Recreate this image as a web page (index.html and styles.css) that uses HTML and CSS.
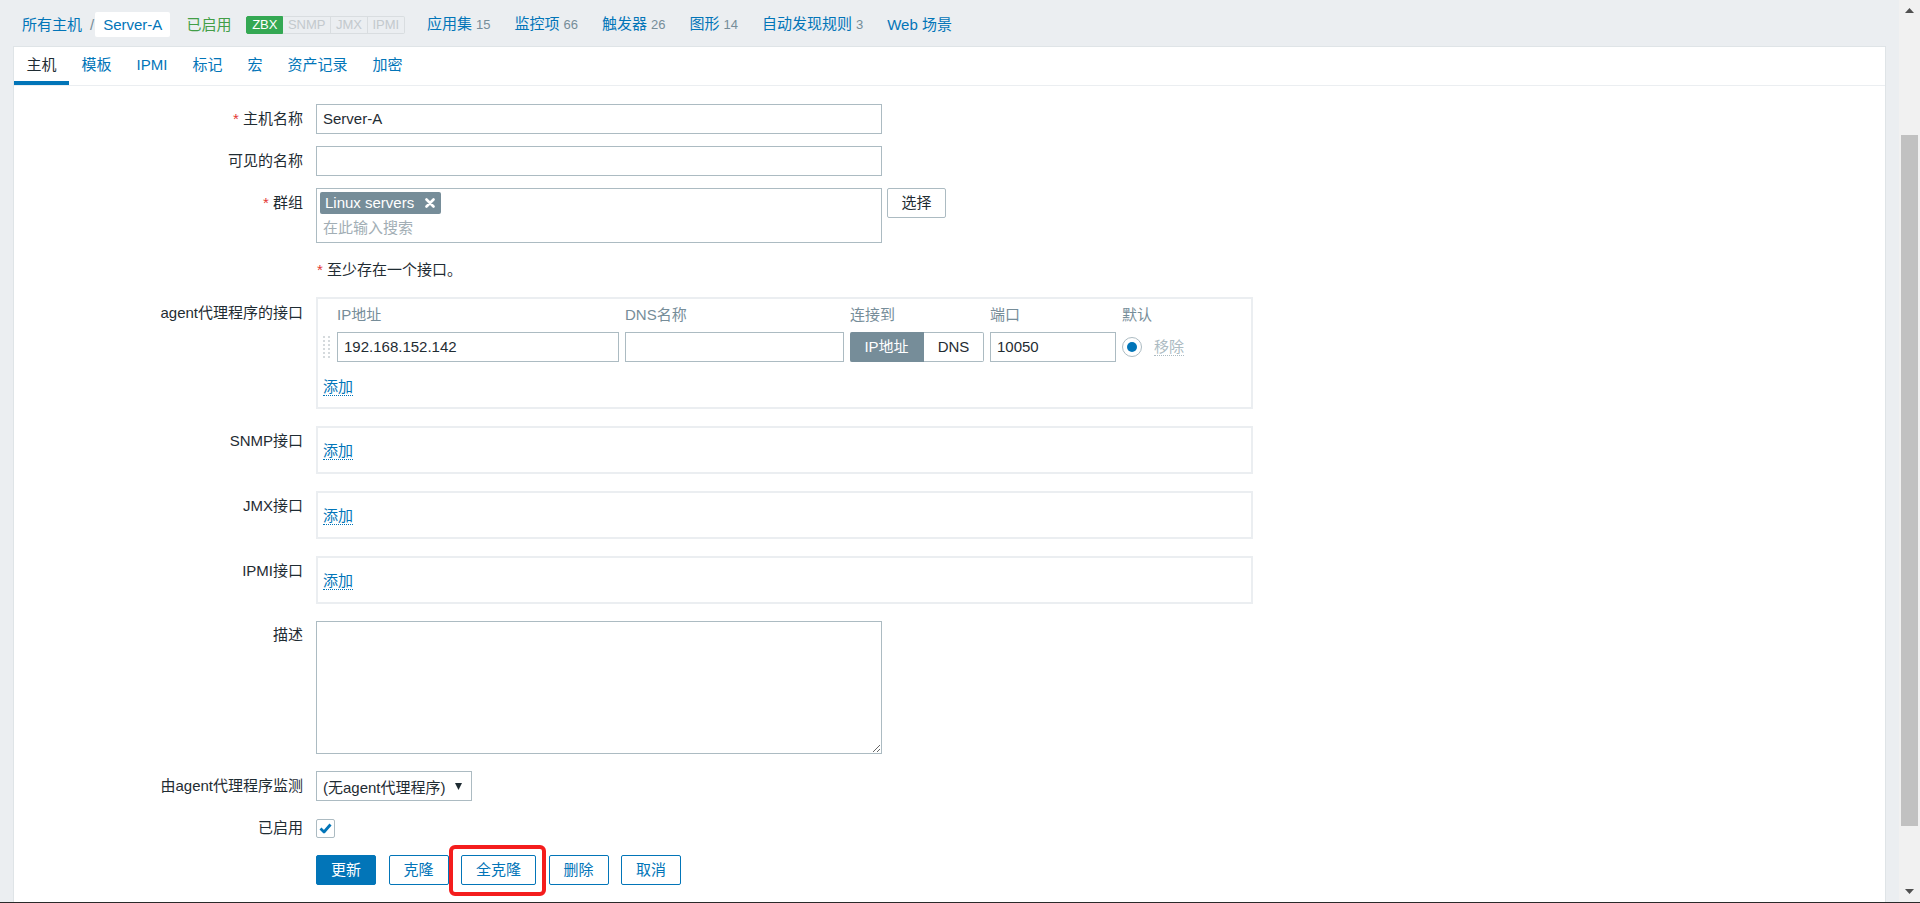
FILE: index.html
```html
<!DOCTYPE html>
<html lang="zh-CN">
<head>
<meta charset="utf-8">
<title>主机</title>
<link rel="stylesheet" href="styles.css">
</head>
<body>
<div class="page">
  <div class="header">
    <a class="link crumb">所有主机</a><span class="sep">/</span><span class="crumb-cur">Server-A</span>
    <span class="status-on">已启用</span>
    <span class="avail"><span class="av av-on">ZBX</span><span class="av">SNMP</span><span class="av">JMX</span><span class="av">IPMI</span></span>
    <a class="link nav nav-first">应用集<span class="cnt">15</span></a>
    <a class="link nav">监控项<span class="cnt">66</span></a>
    <a class="link nav">触发器<span class="cnt">26</span></a>
    <a class="link nav">图形<span class="cnt">14</span></a>
    <a class="link nav">自动发现规则<span class="cnt">3</span></a>
    <a class="link nav">Web 场景</a>
  </div>
  <div class="panel">
    <ul class="tabs">
      <li class="tab tab-active">主机</li>
      <li class="tab">模板</li>
      <li class="tab">IPMI</li>
      <li class="tab">标记</li>
      <li class="tab">宏</li>
      <li class="tab">资产记录</li>
      <li class="tab">加密</li>
    </ul>
    <div class="form">
      <div class="row row-first">
        <div class="lbl"><span class="req">*</span> 主机名称</div>
        <div class="field"><div class="input">Server-A</div></div>
      </div>
      <div class="row">
        <div class="lbl">可见的名称</div>
        <div class="field"><div class="input"></div></div>
      </div>
      <div class="row">
        <div class="lbl"><span class="req">*</span> 群组</div>
        <div class="field field-inline">
          <div class="multiselect">
            <span class="tag">Linux servers<svg class="tag-x" width="10" height="10" viewBox="0 0 10 10"><path d="M1.5 1.5 L8.5 8.5 M8.5 1.5 L1.5 8.5" stroke="#fff" stroke-width="2.6" stroke-linecap="round"/></svg></span>
            <div class="placeholder">在此输入搜索</div>
          </div>
          <div class="btn-grey">选择</div>
        </div>
      </div>
      <div class="row">
        <div class="lbl"></div>
        <div class="field msg"><span class="req">*</span> 至少存在一个接口。</div>
      </div>
      <div class="row">
        <div class="lbl lbl-box">agent代理程序的接口</div>
        <div class="field">
          <div class="iface iface-agent">
            <div class="iface-grid">
              <span></span>
              <span class="th">IP地址</span>
              <span class="th">DNS名称</span>
              <span class="th">连接到</span>
              <span class="th">端口</span>
              <span class="th">默认</span>
              <svg class="drag" width="8" height="24" viewBox="0 0 8 24"><g fill="#d5dadd"><rect x="0" y="0" width="2" height="2"/><rect x="5" y="0" width="2" height="2"/><rect x="0" y="4" width="2" height="2"/><rect x="5" y="4" width="2" height="2"/><rect x="0" y="8" width="2" height="2"/><rect x="5" y="8" width="2" height="2"/><rect x="0" y="12" width="2" height="2"/><rect x="5" y="12" width="2" height="2"/><rect x="0" y="16" width="2" height="2"/><rect x="5" y="16" width="2" height="2"/><rect x="0" y="20" width="2" height="2"/><rect x="5" y="20" width="2" height="2"/></g></svg>
              <div class="input">192.168.152.142</div>
              <div class="input"></div>
              <div class="toggle"><span class="tg tg-on">IP地址</span><span class="tg">DNS</span></div>
              <div class="input">10050</div>
              <div class="default-cell"><span class="radio"><span class="radio-dot"></span></span><span class="remove">移除</span></div>
            </div>
            <a class="add add-agent">添加</a>
          </div>
        </div>
      </div>
      <div class="row row-loose">
        <div class="lbl">SNMP接口</div>
        <div class="field"><div class="iface iface-empty"><a class="add">添加</a></div></div>
      </div>
      <div class="row row-loose">
        <div class="lbl">JMX接口</div>
        <div class="field"><div class="iface iface-empty"><a class="add">添加</a></div></div>
      </div>
      <div class="row row-loose">
        <div class="lbl">IPMI接口</div>
        <div class="field"><div class="iface iface-empty"><a class="add">添加</a></div></div>
      </div>
      <div class="row row-loose">
        <div class="lbl lbl-ta">描述</div>
        <div class="field"><textarea class="textarea"></textarea></div>
      </div>
      <div class="row row-loose">
        <div class="lbl">由agent代理程序监测</div>
        <div class="field"><div class="select"><span>(无agent代理程序)</span><svg width="7" height="7" viewBox="0 0 7 7"><polygon points="0,0 7,0 3.5,7" fill="#1f2c33"/></svg></div></div>
      </div>
      <div class="row row-loose">
        <div class="lbl lbl-cb">已启用</div>
        <div class="field"><div class="checkbox"><svg width="17" height="17" viewBox="0 0 17 17"><path d="M3.5 8.5 L7 12 L13.5 4.5" fill="none" stroke="#0275b8" stroke-width="2.8" stroke-linejoin="round"/></svg></div></div>
      </div>
      <div class="row row-loose">
        <div class="lbl"></div>
        <div class="field buttons">
          <span class="btn btn-main">更新</span>
          <span class="btn">克隆</span>
          <span class="btn btn-marked">全克隆</span>
          <span class="btn">删除</span>
          <span class="btn">取消</span>
        </div>
      </div>
    </div>
  </div>
</div>
<div class="scrollbar">
  <div class="sb-btn"><svg width="9" height="5" viewBox="0 0 9 5"><polygon points="0,5 9,5 4.5,0" fill="#505050"/></svg></div>
  <div class="sb-track"><div class="sb-thumb"></div></div>
  <div class="sb-btn"><svg width="9" height="5" viewBox="0 0 9 5"><polygon points="0,0 9,0 4.5,5" fill="#505050"/></svg></div>
</div>
</body>
</html>
```
FILE: styles.css
```css
* { box-sizing: border-box; }
html, body { margin: 0; padding: 0; }
body {
  height: 903px;
  overflow: hidden;
  background: #ebeef1;
  font-family: "Liberation Sans", Arial, "Noto Sans CJK SC", sans-serif;
  font-size: 15px;
  color: #1f2c33;
  display: flex;
  border-bottom: 1px solid #2a2a2a;
}
.page {
  flex: 1;
  min-width: 0;
  padding: 0 13px;
  display: flex;
  flex-direction: column;
}
.link { color: #0275b8; text-decoration: none; }

/* header */
.header {
  height: 46px;
  flex: none;
  display: flex;
  align-items: center;
  padding: 3px 0 0 9px;
  line-height: 20px;
  white-space: nowrap;
}
.sep { color: #768d99; margin: 0 1px 0 8px; }
.crumb-cur {
  background: #fff;
  border-radius: 2px;
  height: 25px;
  line-height: 25px;
  padding: 0 8px;
  color: #0275b8;
}
.status-on { color: #429e47; margin-left: 16px; }
.avail {
  display: flex;
  margin-left: 15px;
  font-size: 13px;
  line-height: 16px;
}
.av {
  padding: 0 4.75px;
  border: 1px solid #d9dde0;
  border-left: none;
  color: #c3c9cd;
}
.av:last-child { border-radius: 0 2px 2px 0; }
.av-on {
  background: #34a853;
  border: 1px solid #34a853;
  color: #fff;
  border-radius: 2px 0 0 2px;
}
.nav { margin-left: 24px; }
.nav-first { margin-left: 22px; }
.cnt { color: #768d99; font-size: 13px; margin-left: 4px; }

/* panel */
.panel {
  flex: 1;
  background: #fff;
  border: 1px solid #dfe4e7;
  border-bottom: none;
}
.tabs {
  list-style: none;
  margin: 0;
  padding: 0;
  display: flex;
  height: 39px;
  border-bottom: 1px solid #ebeef1;
}
.tab {
  padding: 2px 12.5px 0;
  line-height: 32px;
  height: 38px;
  border-bottom: 4px solid transparent;
  color: #0275b8;
}
.tab-active { color: #1f2c33; border-bottom-color: #0275b8; }

/* form */
.form { padding-top: 18px; }
.row {
  display: grid;
  grid-template-columns: 289px 1fr;
  column-gap: 13px;
  margin-top: 12px;
}
.row-first { margin-top: 0; }
.row-loose { margin-top: 17px; }
.lbl {
  text-align: right;
  line-height: 30px;
  white-space: nowrap;
}
.lbl-box { line-height: 32px; }
.lbl-ta { line-height: 28px; }
.lbl-cb { line-height: 20px; }
.req { color: #e33734; }
.field { min-width: 0; }
.field-inline { display: flex; align-items: flex-start; }
.input {
  width: 566px;
  height: 30px;
  border: 1px solid #acbbc2;
  background: #fff;
  padding: 0 6px;
  line-height: 28px;
  color: #1f2c33;
  white-space: nowrap;
}
.multiselect {
  width: 566px;
  height: 55px;
  border: 1px solid #acbbc2;
  padding: 3px;
}
.tag {
  display: inline-flex;
  align-items: center;
  height: 22px;
  line-height: 22px;
  padding: 0 6px 0 5px;
  background: #768d99;
  color: #fff;
  border-radius: 2px;
  vertical-align: top;
}
.tag-x { margin-left: 11px; }
.placeholder {
  margin-top: 4px;
  line-height: 20px;
  padding-left: 3px;
  color: #a2aeb5;
}
.btn-grey {
  margin-left: 5px;
  height: 30px;
  width: 59px;
  border: 1px solid #acbbc2;
  border-radius: 2px;
  text-align: center;
  line-height: 28px;
  background: #fff;
}
.msg { line-height: 30px; padding-left: 1px; }

/* interfaces */
.iface {
  width: 937px;
  border: 2px solid #ebeef1;
  padding-left: 5px;
}
.iface-agent { height: 112px; padding-top: 6px; }
.iface-empty { height: 48px; padding-top: 14px; }
.iface-grid {
  display: grid;
  grid-template-columns: 8px 282px 219px 134px 126px auto;
  column-gap: 6px;
  row-gap: 7px;
  align-items: center;
}
.th { color: #768d99; line-height: 20px; }
.iface-grid .input { width: auto; }
.drag { display: block; margin-top: 1px; }
.toggle {
  display: flex;
  height: 30px;
  border-radius: 2px;
}
.tg {
  width: 60px;
  text-align: center;
  line-height: 28px;
  border: 1px solid #acbbc2;
  border-left: none;
  border-radius: 0 2px 2px 0;
}
.tg-on {
  width: 74px;
  background: #768d99;
  border-color: #768d99;
  color: #fff;
  border-radius: 2px 0 0 2px;
}
.default-cell { display: flex; align-items: center; }
.radio {
  width: 20px;
  height: 20px;
  border: 1px solid #acbbc2;
  border-radius: 50%;
  display: flex;
  align-items: center;
  justify-content: center;
}
.radio-dot {
  width: 10px;
  height: 10px;
  border-radius: 50%;
  background: #0275b8;
}
.remove {
  margin-left: 12px;
  color: #acbbc2;
  line-height: 17px;
  border-bottom: 1px dotted #acbbc2;
}
.add {
  display: inline-block;
  color: #0275b8;
  line-height: 16px;
  border-bottom: 1px dotted #0275b8;
}
.add-agent { margin-top: 17px; }

.textarea {
  display: block;
  width: 566px;
  height: 133px;
  border: 1px solid #acbbc2;
  border-radius: 0;
  font: inherit;
  margin: 0;
  padding: 4px 6px;
}
.select {
  width: 156px;
  height: 30px;
  border: 1px solid #acbbc2;
  display: flex;
  align-items: center;
  justify-content: space-between;
  padding: 0 9px 0 6px;
  white-space: nowrap;
}
.checkbox {
  width: 19px;
  height: 19px;
  margin-top: 1px;
  border: 1px solid #acbbc2;
  border-radius: 2px;
  display: flex;
  align-items: center;
  justify-content: center;
}
.buttons { display: flex; gap: 12.5px; }
.btn {
  position: relative;
  height: 30px;
  padding: 0 14px;
  line-height: 28px;
  border: 1px solid #0275b8;
  border-radius: 2px;
  color: #0275b8;
  background: #fff;
  white-space: nowrap;
}
.btn-main { background: #0275b8; color: #fff; }
.btn-marked::after {
  content: "";
  position: absolute;
  left: -13px;
  right: -11px;
  top: -11px;
  bottom: -12px;
  border: 4px solid #f41d1d;
  border-radius: 6px;
}

/* scrollbar */
.scrollbar {
  width: 21px;
  flex: none;
  background: #f1f1f1;
  display: flex;
  flex-direction: column;
}
.sb-btn {
  height: 21px;
  display: flex;
  align-items: center;
  justify-content: center;
}
.sb-track { flex: 1; padding: 114px 2px 0; }
.sb-thumb { height: 691px; background: #c1c1c1; }
```
